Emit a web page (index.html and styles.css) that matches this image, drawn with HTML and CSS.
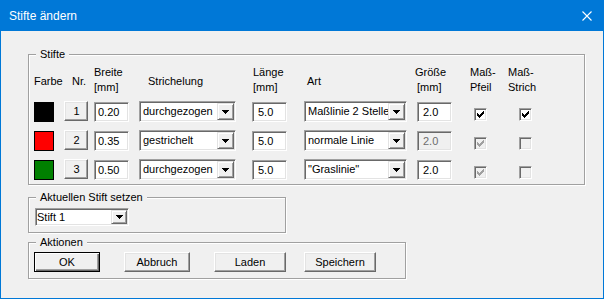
FILE: index.html
```html
<!DOCTYPE html>
<html lang="de">
<head>
<meta charset="utf-8">
<title>Stifte ändern</title>
<link rel="stylesheet" href="styles.css">
</head>
<body>
<div class="window">
  <div class="titlebar">
    <span class="title">Stifte ändern</span>
    <svg class="close" width="10" height="10" viewBox="0 0 10 10"><path d="M0.5 0.5L9.5 9.5M9.5 0.5L0.5 9.5" stroke="#fff" stroke-width="1.1" fill="none"/></svg>
  </div>
  <div class="content">
    <div class="group group-pens">
      <span class="group-title">Stifte</span>
      <div class="pen-grid">
        <div class="hd hd-single">Farbe</div>
        <div class="hd hd-single hd-nr">Nr.</div>
        <div class="hd">Breite<br>[mm]</div>
        <div class="hd hd-single hd-strich">Strichelung</div>
        <div class="hd hd-laenge">Länge<br>[mm]</div>
        <div class="hd hd-single hd-art">Art</div>
        <div class="hd hd-groesse">Größe<br><span class="hd-sub">[mm]</span></div>
        <div class="hd">Maß-<br>Pfeil</div>
        <div class="hd">Maß-<br>Strich</div>

        <div class="swatch swatch-black"></div>
        <div class="btn btn-nr">1</div>
        <div class="edit">0.20</div>
        <div class="combo combo-strich"><span class="combo-text">durchgezogen</span><span class="combo-btn"><svg width="7" height="4" viewBox="0 0 7 4"><path d="M0 0h7v1H0zM1 1h5v1H1zM2 2h3v1H2zM3 3h1v1H3z" fill="#000"/></svg></span></div>
        <div class="edit edit-num">5.0</div>
        <div class="combo combo-art"><span class="combo-text">Maßlinie 2 Stellen</span><span class="combo-btn"><svg width="7" height="4" viewBox="0 0 7 4"><path d="M0 0h7v1H0zM1 1h5v1H1zM2 2h3v1H2zM3 3h1v1H3z" fill="#000"/></svg></span></div>
        <div class="edit edit-num">2.0</div>
        <div class="check check-pfeil"><svg width="7" height="7" viewBox="0 0 7 7"><path d="M6 0h1v1H6zM5 1h2v1H5zM0 2h1v1H0zM4 2h3v1H4zM0 3h2v1H0zM3 3h3v1H3zM0 4h5v1H0zM1 5h3v1H1zM2 6h1v1H2z" fill="#000"/></svg></div>
        <div class="check check-strich"><svg width="7" height="7" viewBox="0 0 7 7"><path d="M6 0h1v1H6zM5 1h2v1H5zM0 2h1v1H0zM4 2h3v1H4zM0 3h2v1H0zM3 3h3v1H3zM0 4h5v1H0zM1 5h3v1H1zM2 6h1v1H2z" fill="#000"/></svg></div>

        <div class="swatch swatch-red"></div>
        <div class="btn btn-nr">2</div>
        <div class="edit">0.35</div>
        <div class="combo combo-strich"><span class="combo-text">gestrichelt</span><span class="combo-btn"><svg width="7" height="4" viewBox="0 0 7 4"><path d="M0 0h7v1H0zM1 1h5v1H1zM2 2h3v1H2zM3 3h1v1H3z" fill="#000"/></svg></span></div>
        <div class="edit edit-num">5.0</div>
        <div class="combo combo-art"><span class="combo-text">normale Linie</span><span class="combo-btn"><svg width="7" height="4" viewBox="0 0 7 4"><path d="M0 0h7v1H0zM1 1h5v1H1zM2 2h3v1H2zM3 3h1v1H3z" fill="#000"/></svg></span></div>
        <div class="edit edit-num edit-disabled">2.0</div>
        <div class="check check-pfeil check-disabled"><svg width="7" height="7" viewBox="0 0 7 7"><path d="M6 0h1v1H6zM5 1h2v1H5zM0 2h1v1H0zM4 2h3v1H4zM0 3h2v1H0zM3 3h3v1H3zM0 4h5v1H0zM1 5h3v1H1zM2 6h1v1H2z" fill="#a0a0a0"/></svg></div>
        <div class="check check-strich check-disabled"></div>

        <div class="swatch swatch-green"></div>
        <div class="btn btn-nr">3</div>
        <div class="edit">0.50</div>
        <div class="combo combo-strich"><span class="combo-text">durchgezogen</span><span class="combo-btn"><svg width="7" height="4" viewBox="0 0 7 4"><path d="M0 0h7v1H0zM1 1h5v1H1zM2 2h3v1H2zM3 3h1v1H3z" fill="#000"/></svg></span></div>
        <div class="edit edit-num">5.0</div>
        <div class="combo combo-art"><span class="combo-text">"Graslinie"</span><span class="combo-btn"><svg width="7" height="4" viewBox="0 0 7 4"><path d="M0 0h7v1H0zM1 1h5v1H1zM2 2h3v1H2zM3 3h1v1H3z" fill="#000"/></svg></span></div>
        <div class="edit edit-num">2.0</div>
        <div class="check check-pfeil check-disabled"><svg width="7" height="7" viewBox="0 0 7 7"><path d="M6 0h1v1H6zM5 1h2v1H5zM0 2h1v1H0zM4 2h3v1H4zM0 3h2v1H0zM3 3h3v1H3zM0 4h5v1H0zM1 5h3v1H1zM2 6h1v1H2z" fill="#a0a0a0"/></svg></div>
        <div class="check check-strich check-disabled"></div>
      </div>
    </div>

    <div class="group group-current">
      <span class="group-title">Aktuellen Stift setzen</span>
      <div class="combo combo-current"><span class="combo-text">Stift 1</span><span class="combo-btn"><svg width="7" height="4" viewBox="0 0 7 4"><path d="M0 0h7v1H0zM1 1h5v1H1zM2 2h3v1H2zM3 3h1v1H3z" fill="#000"/></svg></span></div>
    </div>

    <div class="group group-actions">
      <span class="group-title">Aktionen</span>
      <div class="actions">
        <div class="btn btn-action btn-default">OK</div>
        <div class="btn btn-action">Abbruch</div>
        <div class="btn btn-action btn-wide">Laden</div>
        <div class="btn btn-action btn-wide">Speichern</div>
      </div>
    </div>
  </div>
</div>
</body>
</html>
```

FILE: styles.css
```css
html, body {
  margin: 0;
  padding: 0;
  background: #f0f0f0;
}

body {
  font-family: "Liberation Sans", Arial, sans-serif;
  font-size: 11px;
  color: #000;
}

.window {
  width: 604px;
  height: 299px;
  box-sizing: border-box;
  border: 1px solid #0078d7;
  background: #f0f0f0;
  overflow: hidden;
}

.titlebar {
  height: 30px;
  background: #0078d7;
  color: #fff;
  display: flex;
  align-items: center;
  padding: 0 11px 0 8px;
  font-size: 12px;
}

.title {
  flex: 1;
}

.close {
  display: block;
}

.content {
  padding: 23px 0 0 27px;
  display: flex;
  flex-direction: column;
  align-items: flex-start;
}

.group {
  position: relative;
  box-sizing: border-box;
  border: 1px solid #a0a0a0;
  box-shadow: inset 1px 1px 0 #fff, 1px 1px 0 #fff;
}

.group-title {
  position: absolute;
  top: -8px;
  left: 7px;
  padding: 0 4px;
  background: #f0f0f0;
  line-height: 14px;
  white-space: nowrap;
}

.group-pens {
  width: 557px;
  padding: 10px 0 4px 5px;
}

.pen-grid {
  display: grid;
  grid-template-columns: 30px 30px 45px 113px 52px 113px 53px 38px 1fr;
  grid-template-rows: 28px repeat(3, 20px);
  row-gap: 9px;
  align-items: start;
}

.hd {
  line-height: 15px;
  white-space: nowrap;
}

.hd-single {
  padding-top: 9px;
}

.hd-nr {
  padding-left: 8px;
}

.hd-strich {
  padding-left: 9px;
}

.hd-laenge {
  padding-left: 1px;
}

.hd-art {
  padding-left: 3px;
}

.hd-groesse {
  margin-left: -2px;
}

.hd-sub {
  padding-left: 2px;
}

.swatch {
  width: 20px;
  height: 20px;
  box-sizing: border-box;
  border: 1px solid #000;
}

.swatch-black { background: #000; }
.swatch-red { background: #ff0000; }
.swatch-green { background: #008000; }

.btn {
  box-sizing: border-box;
  background: #f0f0f0;
  border: 1px solid;
  border-color: #fff #696969 #696969 #fff;
  box-shadow: inset -1px -1px 0 #a0a0a0, inset 1px 1px 0 #e3e3e3;
  display: flex;
  align-items: center;
  justify-content: center;
  white-space: nowrap;
}

.btn-nr {
  width: 24px;
  height: 20px;
  margin-top: -1px;
  padding-left: 1px;
}

.edit {
  width: 35px;
  height: 20px;
  box-sizing: border-box;
  background: #fff;
  border: 1px solid;
  border-color: #a0a0a0 #fff #fff #a0a0a0;
  box-shadow: inset 1px 1px 0 #696969, inset -1px -1px 0 #e3e3e3;
  padding-left: 3px;
  line-height: 18px;
  white-space: nowrap;
}

.edit-num {
  padding-left: 5px;
}

.edit-disabled {
  background: #f0f0f0;
  color: #6d6d6d;
}

.combo {
  box-sizing: border-box;
  height: 21px;
  margin-top: -1px;
  background: #fff;
  border: 1px solid;
  border-color: #a0a0a0 #fff #fff #a0a0a0;
  box-shadow: inset 1px 1px 0 #696969, inset -1px -1px 0 #e3e3e3;
  padding: 1px;
  display: flex;
  align-items: stretch;
}

.combo-text {
  flex: 1;
  min-width: 0;
  overflow: hidden;
  white-space: nowrap;
  padding-left: 2px;
  line-height: 17px;
}

.combo-btn {
  flex: none;
  width: 17px;
  box-sizing: border-box;
  background: #f0f0f0;
  border: 1px solid;
  border-color: #e3e3e3 #696969 #696969 #e3e3e3;
  box-shadow: inset 1px 1px 0 #fff, inset -1px -1px 0 #a0a0a0;
  display: flex;
  align-items: center;
  justify-content: center;
}

.combo-btn svg {
  display: block;
}

.combo-strich {
  width: 97px;
}

.combo-art {
  width: 103px;
}

.combo-current {
  width: 94px;
  height: 18px;
  margin-top: 0;
}

.combo-current .combo-text {
  padding-left: 0;
  line-height: 14px;
}

.combo-current .combo-btn {
  width: 16px;
}

.check {
  width: 13px;
  height: 13px;
  box-sizing: border-box;
  background: #fff;
  border: 1px solid;
  border-color: #a0a0a0 #fff #fff #a0a0a0;
  box-shadow: inset 1px 1px 0 #696969, inset -1px -1px 0 #e3e3e3;
  margin-top: 6px;
  display: flex;
  align-items: center;
  justify-content: center;
}

.check svg {
  display: block;
}

.check-disabled {
  background: #f0f0f0;
}

.check-pfeil {
  margin-left: 4px;
}

.check-strich {
  margin-left: 11px;
}

.group-current {
  width: 258px;
  margin-top: 12px;
  padding: 10px 0 6px 6px;
}

.group-actions {
  width: 378px;
  margin-top: 9px;
  padding: 9px 0 6px 5px;
}

.actions {
  display: grid;
  grid-template-columns: 90px 90px 90px 72px;
}

.btn-action {
  width: 66px;
  height: 20px;
}

.btn-wide {
  width: 72px;
}

.btn-default {
  border-color: #000;
  box-shadow: inset 1px 1px 0 #fff, inset -1px -1px 0 #696969, inset -2px -2px 0 #a0a0a0;
}
```
